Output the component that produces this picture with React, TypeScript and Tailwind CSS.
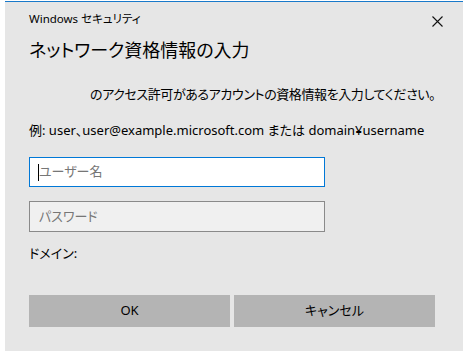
import React from "react";

const font = "font-['Noto_Sans','Noto_Sans_CJK_JP',sans-serif] [font-feature-settings:'palt']";

export default function App() {
  return (
    <div className={`w-[463px] h-[356px] bg-white pt-[1px] pl-[5px] ${font}`}>
      <div className="relative h-[350px] bg-[#e6e6e6] border-t border-[#1979ca] pl-[24px] text-black">
        {/* title bar */}
        <div className="pt-[9px] text-[11.5px] leading-[16px]">Windows セキュリティ</div>
        <button className="absolute right-[20px] top-[13px] w-[12px] h-[12px] flex items-center justify-center">
          <svg width="11" height="11" viewBox="0 0 11 11">
            <path d="M0.5 0.5 L10.5 10.5 M10.5 0.5 L0.5 10.5" stroke="#111" strokeWidth="1.1" />
          </svg>
        </button>

        <h1 className="mt-[9px] text-[18px] leading-[28px] font-normal">ネットワーク資格情報の入力</h1>

        <p className="mt-[20px] ml-[61px] text-[13px] leading-[20px] whitespace-nowrap tracking-[-0.4px]">
          のアクセス許可があるアカウントの資格情報を入力してください。
        </p>

        <p className="mt-[16px] text-[13px] leading-[20px] whitespace-nowrap">
          例: user、user@example.microsoft.com または domain¥username
        </p>

        <div className="mt-[17px] w-[296px] h-[30px] bg-white border border-[#0078d7] flex items-center pl-[8px]">
          <span className="w-[1px] h-[17px] bg-black" />
          <span className="text-[13px] text-[#767676]">ユーザー名</span>
        </div>

        <div className="mt-[14px] w-[296px] h-[31px] bg-[#f0f0f0] border border-[#8a8a8a] flex items-center pl-[9px]">
          <span className="text-[13px] text-[#767676]">パスワード</span>
        </div>

        <p className="mt-[11px] text-[13px] leading-[20px]">ドメイン:</p>

        <div className="mt-[32px] flex gap-[4px]">
          <button className="w-[201px] h-[32px] bg-[#b4b4b4] text-[13px]">OK</button>
          <button className="w-[201px] h-[32px] bg-[#b4b4b4] text-[13px]">キャンセル</button>
        </div>
      </div>
    </div>
  );
}
